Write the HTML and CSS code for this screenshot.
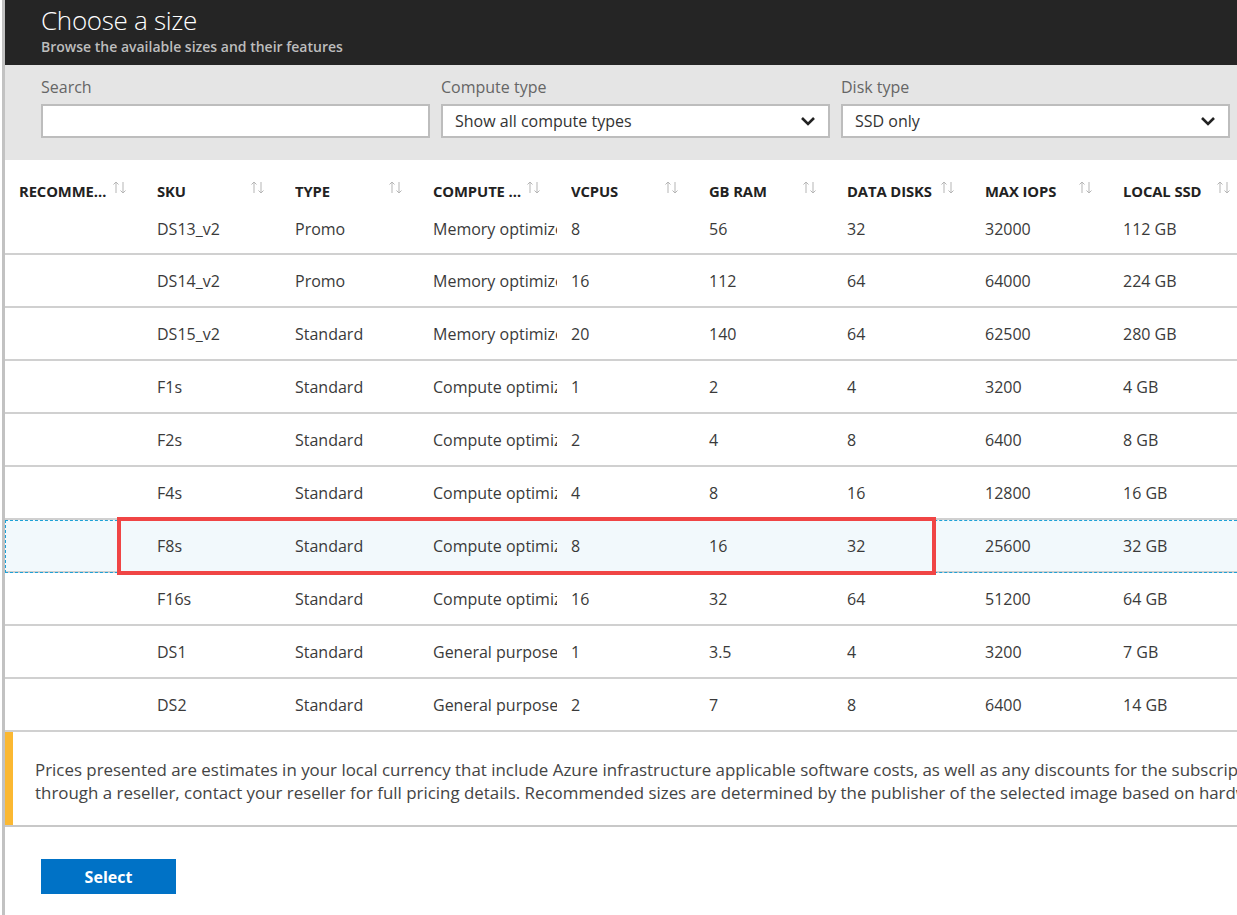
FILE: index.html
```html
<!DOCTYPE html>
<html lang="en">
<head>
<meta charset="utf-8">
<title>Choose a size</title>
<link rel="stylesheet" href="styles.css">
</head>
<body>
<div class="blade">
  <header class="blade-header">
    <h1 class="title">Choose a size</h1>
    <div class="subtitle">Browse the available sizes and their features</div>
  </header>

  <section class="filters">
    <div class="field">
      <label class="field-label">Search</label>
      <div class="input"></div>
    </div>
    <div class="field">
      <label class="field-label">Compute type</label>
      <div class="input select">
        <span>Show all compute types</span>
        <svg class="chev" width="16" height="10" viewBox="0 0 16 10"><polyline points="2,2 8,8 14,2" fill="none" stroke="#222" stroke-width="2.6"/></svg>
      </div>
    </div>
    <div class="field">
      <label class="field-label">Disk type</label>
      <div class="input select">
        <span>SSD only</span>
        <svg class="chev" width="16" height="10" viewBox="0 0 16 10"><polyline points="2,2 8,8 14,2" fill="none" stroke="#222" stroke-width="2.6"/></svg>
      </div>
    </div>
  </section>

  <section class="grid">
    <div class="row head">
      <div class="hcell"><span class="hlabel">Recommended</span><svg class="sort" width="16" height="13" viewBox="0 0 16 13"><path d="M4 12V1M1.5 3.5L4 1l2.5 2.5M11 1v11M8.5 9.5L11 12l2.5-2.5" fill="none" stroke="#b5b5b5" stroke-width="1"/></svg></div>
      <div class="hcell"><span class="hlabel">SKU</span><svg class="sort" width="16" height="13" viewBox="0 0 16 13"><path d="M4 12V1M1.5 3.5L4 1l2.5 2.5M11 1v11M8.5 9.5L11 12l2.5-2.5" fill="none" stroke="#b5b5b5" stroke-width="1"/></svg></div>
      <div class="hcell"><span class="hlabel">Type</span><svg class="sort" width="16" height="13" viewBox="0 0 16 13"><path d="M4 12V1M1.5 3.5L4 1l2.5 2.5M11 1v11M8.5 9.5L11 12l2.5-2.5" fill="none" stroke="#b5b5b5" stroke-width="1"/></svg></div>
      <div class="hcell"><span class="hlabel">Compute type</span><svg class="sort" width="16" height="13" viewBox="0 0 16 13"><path d="M4 12V1M1.5 3.5L4 1l2.5 2.5M11 1v11M8.5 9.5L11 12l2.5-2.5" fill="none" stroke="#b5b5b5" stroke-width="1"/></svg></div>
      <div class="hcell"><span class="hlabel">vCPUs</span><svg class="sort" width="16" height="13" viewBox="0 0 16 13"><path d="M4 12V1M1.5 3.5L4 1l2.5 2.5M11 1v11M8.5 9.5L11 12l2.5-2.5" fill="none" stroke="#b5b5b5" stroke-width="1"/></svg></div>
      <div class="hcell"><span class="hlabel">GB RAM</span><svg class="sort" width="16" height="13" viewBox="0 0 16 13"><path d="M4 12V1M1.5 3.5L4 1l2.5 2.5M11 1v11M8.5 9.5L11 12l2.5-2.5" fill="none" stroke="#b5b5b5" stroke-width="1"/></svg></div>
      <div class="hcell"><span class="hlabel">Data disks</span><svg class="sort" width="16" height="13" viewBox="0 0 16 13"><path d="M4 12V1M1.5 3.5L4 1l2.5 2.5M11 1v11M8.5 9.5L11 12l2.5-2.5" fill="none" stroke="#b5b5b5" stroke-width="1"/></svg></div>
      <div class="hcell"><span class="hlabel">Max IOPS</span><svg class="sort" width="16" height="13" viewBox="0 0 16 13"><path d="M4 12V1M1.5 3.5L4 1l2.5 2.5M11 1v11M8.5 9.5L11 12l2.5-2.5" fill="none" stroke="#b5b5b5" stroke-width="1"/></svg></div>
      <div class="hcell"><span class="hlabel">Local SSD</span><svg class="sort" width="16" height="13" viewBox="0 0 16 13"><path d="M4 12V1M1.5 3.5L4 1l2.5 2.5M11 1v11M8.5 9.5L11 12l2.5-2.5" fill="none" stroke="#b5b5b5" stroke-width="1"/></svg></div>
    </div>

    <div class="body">
      <div class="row first"><div class="cell"></div><div class="cell">DS13_v2</div><div class="cell">Promo</div><div class="cell">Memory optimized</div><div class="cell">8</div><div class="cell">56</div><div class="cell">32</div><div class="cell">32000</div><div class="cell">112 GB</div></div>
      <div class="row"><div class="cell"></div><div class="cell">DS14_v2</div><div class="cell">Promo</div><div class="cell">Memory optimized</div><div class="cell">16</div><div class="cell">112</div><div class="cell">64</div><div class="cell">64000</div><div class="cell">224 GB</div></div>
      <div class="row"><div class="cell"></div><div class="cell">DS15_v2</div><div class="cell">Standard</div><div class="cell">Memory optimized</div><div class="cell">20</div><div class="cell">140</div><div class="cell">64</div><div class="cell">62500</div><div class="cell">280 GB</div></div>
      <div class="row"><div class="cell"></div><div class="cell">F1s</div><div class="cell">Standard</div><div class="cell">Compute optimized</div><div class="cell">1</div><div class="cell">2</div><div class="cell">4</div><div class="cell">3200</div><div class="cell">4 GB</div></div>
      <div class="row"><div class="cell"></div><div class="cell">F2s</div><div class="cell">Standard</div><div class="cell">Compute optimized</div><div class="cell">2</div><div class="cell">4</div><div class="cell">8</div><div class="cell">6400</div><div class="cell">8 GB</div></div>
      <div class="row"><div class="cell"></div><div class="cell">F4s</div><div class="cell">Standard</div><div class="cell">Compute optimized</div><div class="cell">4</div><div class="cell">8</div><div class="cell">16</div><div class="cell">12800</div><div class="cell">16 GB</div></div>
      <div class="row selected"><div class="cell"></div><div class="cell">F8s</div><div class="cell">Standard</div><div class="cell">Compute optimized</div><div class="cell">8</div><div class="cell">16</div><div class="cell">32</div><div class="cell">25600</div><div class="cell">32 GB</div></div>
      <div class="row"><div class="cell"></div><div class="cell">F16s</div><div class="cell">Standard</div><div class="cell">Compute optimized</div><div class="cell">16</div><div class="cell">32</div><div class="cell">64</div><div class="cell">51200</div><div class="cell">64 GB</div></div>
      <div class="row"><div class="cell"></div><div class="cell">DS1</div><div class="cell">Standard</div><div class="cell">General purpose</div><div class="cell">1</div><div class="cell">3.5</div><div class="cell">4</div><div class="cell">3200</div><div class="cell">7 GB</div></div>
      <div class="row"><div class="cell"></div><div class="cell">DS2</div><div class="cell">Standard</div><div class="cell">General purpose</div><div class="cell">2</div><div class="cell">7</div><div class="cell">8</div><div class="cell">6400</div><div class="cell">14 GB</div></div>
      <div class="annotation"></div>
    </div>
  </section>

  <section class="notice">
    <div class="notice-bar"></div>
    <p class="notice-text">Prices presented are estimates in your local currency that include Azure infrastructure applicable software costs, as well as any discounts for the subscription and location. If you purchased Azure services<br>through a reseller, contact your reseller for full pricing details. Recommended sizes are determined by the publisher of the selected image based on hardware and software requirements.</p>
  </section>

  <footer class="actions">
    <button class="btn-primary">Select</button>
  </footer>
</div>
</body>
</html>
```

FILE: styles.css
```css
html, body {
  margin: 0;
  padding: 0;
  background: #ffffff;
}
body {
  font-family: "Open Sans", "Noto Sans", "Liberation Sans", sans-serif;
  color: #333;
  padding-left: 2px;
  overflow: hidden;
}
.blade {
  border-left: 3px solid #c2c2c2;
  min-height: 915px;
  overflow: hidden;
}

/* header */
.blade-header {
  background: #252525;
  height: 65px;
  padding-left: 36px;
  box-sizing: border-box;
  padding-top: 4px;
}
.title {
  margin: 0;
  font-size: 26px;
  font-weight: 300;
  color: #ffffff;
  line-height: 32px;
  letter-spacing: -0.3px;
}
.subtitle {
  font-size: 14px;
  font-weight: 600;
  color: #bdbdbd;
  line-height: 18px;
  margin-top: 2px;
}

/* filters */
.filters {
  background: #e5e5e5;
  height: 95px;
  box-sizing: border-box;
  padding: 11px 0 0 36px;
  display: grid;
  grid-template-columns: 389px 389px 389px;
  column-gap: 11px;
}
.field {
  display: flex;
  flex-direction: column;
}
.field-label {
  font-size: 16px;
  color: #666;
  line-height: 22px;
  margin-bottom: 6px;
}
.input {
  height: 34px;
  box-sizing: border-box;
  background: #fff;
  border: 2px solid #bdbdbd;
}
.select {
  display: flex;
  align-items: center;
  justify-content: space-between;
  padding: 0 12px 1px 12px;
  font-size: 16px;
  color: #333;
}
.chev {
  display: block;
}

/* grid */
.grid {
  width: 1242px;
}
.row {
  display: grid;
  grid-template-columns: repeat(9, 138px);
}
.head {
  height: 44px;
}
.hcell {
  display: flex;
  align-items: flex-start;
  padding: 21px 15px 0 14px;
  box-sizing: border-box;
  min-width: 0;
}
.hlabel {
  flex: 1;
  min-width: 0;
  font-size: 14.8px;
  font-weight: 700;
  color: #222;
  text-transform: uppercase;
  white-space: nowrap;
  overflow: hidden;
  text-overflow: ellipsis;
  line-height: 20px;
  letter-spacing: -0.1px;
}
.sort {
  flex: none;
  margin-top: 0;
  margin-left: 2px;
}
.body {
  position: relative;
}
.body .row {
  height: 53px;
  box-sizing: border-box;
  border-bottom: 2px solid #d0d0d0;
}
.body .row.first {
  height: 51px;
}
.cell {
  display: flex;
  align-items: center;
  padding-left: 14px;
  padding-right: 3px;
  font-size: 16px;
  color: #3a3a3a;
  white-space: nowrap;
  overflow: hidden;
  min-width: 0;
}
.row.selected {
  background: #f2f9fc;
  outline: 1px dashed #1ea1d6;
  outline-offset: -1px;
}
.annotation {
  position: absolute;
  left: 112px;
  top: 313px;
  width: 819px;
  height: 58px;
  border: 4px solid #f04545;
  box-sizing: border-box;
  pointer-events: none;
}

/* notice */
.notice {
  display: flex;
  height: 95px;
  box-sizing: border-box;
  border-bottom: 2px solid #c8c8c8;
}
.notice-bar {
  width: 8px;
  flex: none;
  background: #fbb832;
}
.notice-text {
  margin: 0;
  padding: 26px 0 0 22px;
  font-size: 16.9px;
  line-height: 23px;
  color: #444;
  white-space: nowrap;
}

/* footer */
.actions {
  padding: 32px 0 0 36px;
}
.btn-primary {
  width: 135px;
  height: 35px;
  border: none;
  background: #0072c6;
  color: #fff;
  font-family: inherit;
  font-size: 16px;
  font-weight: 700;
  padding: 0;
  cursor: pointer;
}
```
